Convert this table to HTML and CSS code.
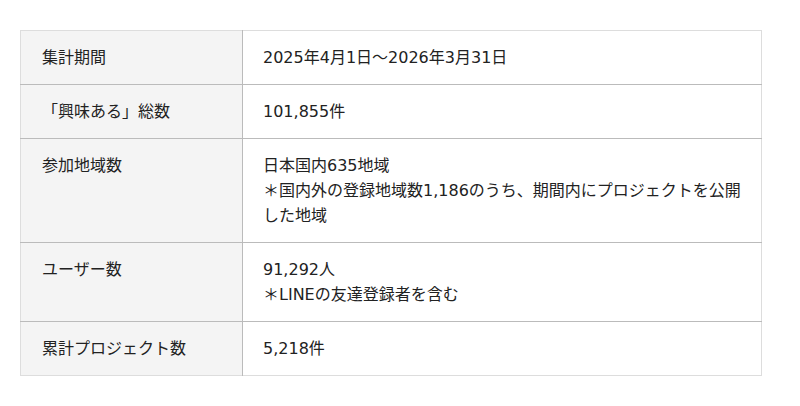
FILE: index.html
```html
<!DOCTYPE html>
<html lang="ja">
<head>
<meta charset="utf-8">
<link rel="stylesheet" href="styles.css">
</head>
<body>
<div class="wrap">
<table class="stats">
  <tr><th>集計期間</th><td>2025年4月1日〜2026年3月31日</td></tr>
  <tr><th>「興味ある」総数</th><td>101,855件</td></tr>
  <tr><th>参加地域数</th><td>日本国内635地域<br>＊国内外の登録地域数1,186のうち、期間内にプロジェクトを公開した地域</td></tr>
  <tr><th>ユーザー数</th><td>91,292人<br>＊LINEの友達登録者を含む</td></tr>
  <tr><th>累計プロジェクト数</th><td>5,218件</td></tr>
</table>
</div>
</body>
</html>
```
FILE: styles.css
```css
html, body {
  margin: 0;
  padding: 0;
  background: #fff;
}
.wrap {
  padding: 30px 38px 30px 20px;
}
.stats {
  width: 742px;
  border-collapse: collapse;
  border: 1px solid #ddd;
  font-family: "DejaVu Sans", "Noto Sans CJK JP", sans-serif;
  font-size: 16px;
  line-height: 25px;
  color: #222;
}
.stats th,
.stats td {
  text-align: left;
  vertical-align: top;
  font-weight: normal;
  padding: 14px 20px;
  border-top: 1px solid #bbb;
}
.stats tr:first-child th,
.stats tr:first-child td {
  border-top: 1px solid #ddd;
}
.stats th {
  width: 180px;
  padding-left: 21px;
  background: #f4f4f4;
  border-right: 1px solid #bbb;
}
```
